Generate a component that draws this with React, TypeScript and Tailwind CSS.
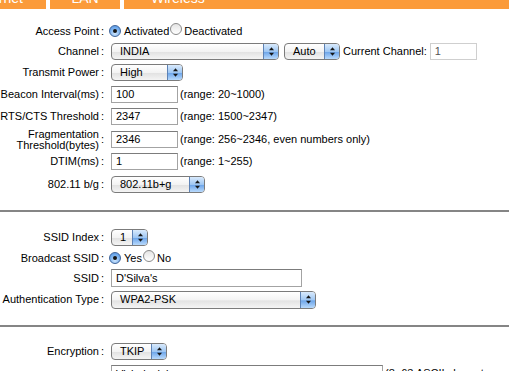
import React from "react";

function Arrows() {
  return (
    <svg width="7" height="11" viewBox="0 0 7 11">
      <path d="M3.5 1.2 L6 4.3 L1 4.3 Z" fill="#151515" />
      <path d="M3.5 9.8 L6 6.7 L1 6.7 Z" fill="#151515" />
    </svg>
  );
}

function Select({ value, className }: { value: string; className: string }) {
  return (
    <div
      className={`flex h-[17px] shrink-0 items-stretch overflow-hidden rounded-[4px] border border-[#7b7b7b] bg-[linear-gradient(#ffffff,#f3f3f3_50%,#e2e2e2_55%,#f4f4f4)] ${className}`}
    >
      <div className="flex flex-1 items-center pl-[8px] text-[11px] leading-none text-black">{value}</div>
      <div className="flex w-[15px] items-center justify-center border-l border-[#5d82b5] bg-[linear-gradient(#d9eafc,#9fc7f3_50%,#6ea6ea_55%,#b9dafc)]">
        <Arrows />
      </div>
    </div>
  );
}

function Radio({ checked }: { checked?: boolean }) {
  return checked ? (
    <span className="inline-flex h-[12px] w-[12px] shrink-0 items-center justify-center rounded-full border border-[#3f659a] bg-[radial-gradient(circle_at_50%_75%,#cfe6fd,#75aeee_60%,#4f8fe0)]">
      <span className="h-[4px] w-[4px] rounded-full bg-[#151515]" />
    </span>
  ) : (
    <span className="inline-block h-[12px] w-[12px] shrink-0 rounded-full border border-[#8a8a8a] bg-[linear-gradient(#e4e4e4,#ffffff)]" />
  );
}

function Input({ value, className, muted }: { value: string; className: string; muted?: boolean }) {
  return (
    <div
      className={`flex h-[17px] shrink-0 items-center border bg-white pl-[4px] text-[11px] leading-none ${
        muted ? "border-[#cfcfcf] text-[#555]" : "border-[#a3a3a3] border-t-[#7c7c7c] text-black"
      } ${className}`}
    >
      {value}
    </div>
  );
}

function Row({ label, h, children }: { label: React.ReactNode; h: string; children: React.ReactNode }) {
  return (
    <div className={`flex items-center ${h}`}>
      <div className="w-[99px] shrink-0 text-right leading-[11px]">{label}</div>
      <div className="w-[12px] shrink-0 pl-[2px]">:</div>
      <div className="flex items-center">{children}</div>
    </div>
  );
}

function Note({ children }: { children: React.ReactNode }) {
  return <span className="ml-[2px] shrink-0 whitespace-nowrap">{children}</span>;
}

export default function App() {
  return (
    <div
      className="h-[371px] w-[509px] overflow-hidden bg-white text-[11px] text-black"
      style={{ fontFamily: '"Liberation Sans", Arial, sans-serif' }}
    >
      {/* tabs */}
      <div className="flex h-[9px] gap-[4px] overflow-hidden text-[14px] leading-[14px] text-white">
        <div className="flex w-[46px] shrink-0 justify-end overflow-hidden bg-[#fb9b3a] pr-[23px]">
          <span className="-mt-[9px] whitespace-nowrap">Internet</span>
        </div>
        <div className="flex w-[70px] shrink-0 justify-center bg-[#fb9b3a]">
          <span className="-mt-[9px] whitespace-nowrap">LAN</span>
        </div>
        <div className="flex flex-1 bg-[#fb9b3a] pl-[27px]">
          <span className="-mt-[9px] whitespace-nowrap">Wireless</span>
        </div>
      </div>

      <div className="h-[12px]" />

      <Row label="Access Point" h="h-[20px]">
        <div className="-ml-[2px] flex items-center">
          <Radio checked />
          <span className="ml-[3px]">Activated</span>
          <span className="ml-[1px]">
            <Radio />
          </span>
          <span className="ml-[2px]">Deactivated</span>
        </div>
      </Row>
      <Row label="Channel" h="h-[20px]">
        <Select value="INDIA" className="w-[168px]" />
        <Select value="Auto" className="ml-[5px] w-[56px]" />
        <span className="ml-[3px] shrink-0 whitespace-nowrap">Current Channel:</span>
        <Input value="1" muted className="ml-[3px] w-[47px]" />
      </Row>
      <Row label="Transmit Power" h="h-[23px]">
        <Select value="High" className="w-[72px]" />
      </Row>
      <Row label="Beacon Interval(ms)" h="h-[21px]">
        <Input value="100" className="w-[67px]" />
        <Note>(range: 20~1000)</Note>
      </Row>
      <Row label="RTS/CTS Threshold" h="h-[23px]">
        <Input value="2347" className="w-[67px]" />
        <Note>(range: 1500~2347)</Note>
      </Row>
      <Row
        label={
          <>
            Fragmentation
            <br />
            Threshold(bytes)
          </>
        }
        h="h-[23px]"
      >
        <Input value="2346" className="w-[67px]" />
        <Note>(range: 256~2346, even numbers only)</Note>
      </Row>
      <Row label="DTIM(ms)" h="h-[21px]">
        <Input value="1" className="w-[67px]" />
        <Note>(range: 1~255)</Note>
      </Row>
      <Row label="802.11 b/g" h="h-[25px]">
        <Select value="802.11b+g" className="w-[94px]" />
      </Row>

      <div className="h-[13px]" />
      <div className="h-[2px] bg-[#858585]" />
      <div className="h-[15px]" />

      <Row label="SSID Index" h="h-[21px]">
        <Select value="1" className="w-[37px]" />
      </Row>
      <Row label="Broadcast SSID" h="h-[20px]">
        <div className="-ml-[2px] flex items-center">
          <Radio checked />
          <span className="ml-[3px]">Yes</span>
          <span className="ml-[1px]">
            <Radio />
          </span>
          <span className="ml-[2px]">No</span>
        </div>
      </Row>
      <Row label="SSID" h="h-[20px]">
        <Input value="D'Silva's" className="h-[18px] w-[191px]" />
      </Row>
      <Row label="Authentication Type" h="h-[23px]">
        <Select value="WPA2-PSK" className="h-[18px] w-[205px]" />
      </Row>

      <div className="h-[14px]" />
      <div className="h-[2px] bg-[#858585]" />
      <div className="h-[14px]" />

      <Row label="Encryption" h="h-[21px]">
        <Select value="TKIP" className="w-[56px]" />
      </Row>
      <div className="flex pt-[3px]">
        <div className="w-[111px] shrink-0" />
        <Input value="Vishalsaini" className="h-[18px] w-[272px]" />
        <Note>(8~63 ASCII characters or 64 hexadecimal characters)</Note>
      </div>
    </div>
  );
}
